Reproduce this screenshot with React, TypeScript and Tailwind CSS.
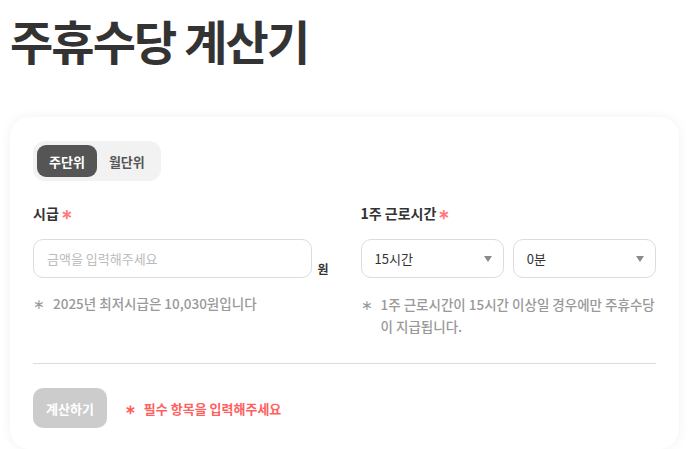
import React from "react";

const font = { fontFamily: '"Noto Sans CJK KR", "Noto Sans", sans-serif' };

function Caret() {
  return (
    <svg width="8" height="6" viewBox="0 0 8 6" className="shrink-0">
      <path d="M0 0 H8 L4 6 Z" fill="#8a8a8a" />
    </svg>
  );
}

function SelectBox({ value }: { value: string }) {
  return (
    <div className="flex-1 h-[39px] rounded-[10px] border border-[#dcdcdc] bg-white flex items-center justify-between pl-[13px] pr-[11px]">
      <span className="text-[13px] text-[#333]">{value}</span>
      <Caret />
    </div>
  );
}

export default function App() {
  return (
    <div className="min-h-screen bg-white px-[10px] overflow-hidden" style={font}>
      <h1 className="text-[47px] font-bold text-[#333] leading-[1.2] tracking-[-0.04em] pt-[12px]">
        주휴수당 계산기
      </h1>
      <div className="mt-[49px] bg-white rounded-[20px] shadow-[0_0_12px_rgba(0,0,0,0.06)] px-[23px] pt-[24px] pb-[21px]">
        <div className="inline-flex bg-[#f2f2f2] rounded-[12px] p-1 gap-0">
          <button className="h-8 px-[12px] rounded-[9px] bg-[#555] text-white text-[13px] font-bold">
            주단위
          </button>
          <button className="h-8 px-[12px] rounded-[9px] text-[#555] text-[13px] font-bold">
            월단위
          </button>
        </div>

        <div className="grid grid-cols-2 gap-8 mt-[22px]">
          <div>
            <div className="text-[14px] font-bold text-[#333] leading-5 flex items-center gap-[2px]">
              시급<span className="text-[#ff7b7b] text-[14px] font-bold leading-none">∗</span>
            </div>
            <div className="flex items-end gap-[5px] mt-[16px]">
              <div className="flex-1 h-[39px] rounded-[10px] border border-[#dcdcdc] flex items-center pl-[13px]">
                <span className="text-[13px] text-[#bbb]">금액을 입력해주세요</span>
              </div>
              <span className="text-[12px] font-bold text-[#333] leading-none pb-[3px]">원</span>
            </div>
            <div className="flex gap-[8px] mt-[15px] text-[13.5px] text-[#999] font-medium leading-[21px]">
              <span>∗</span>
              <span>2025년 최저시급은 10,030원입니다</span>
            </div>
          </div>
          <div>
            <div className="text-[14px] font-bold text-[#333] leading-5 flex items-center gap-[2px]">
              1주 근로시간<span className="text-[#ff7b7b] text-[14px] font-bold leading-none">∗</span>
            </div>
            <div className="flex gap-[9px] mt-[16px]">
              <SelectBox value="15시간" />
              <SelectBox value="0분" />
            </div>
            <div className="flex gap-[8px] mt-[15px] text-[13.5px] text-[#999] font-medium leading-[22px]">
              <span>∗</span>
              <span className="flex-1 whitespace-nowrap">
                1주 근로시간이 15시간 이상일 경우에만 주휴수당
                <br />
                이 지급됩니다.
              </span>
            </div>
          </div>
        </div>

        <div className="h-px bg-[#dcdcdc] mt-[26px]" />

        <div className="flex items-center gap-[18px] mt-[24px]">
          <button className="h-10 px-[13px] rounded-[10px] bg-[#cccccc] text-white text-[13px] font-bold">
            계산하기
          </button>
          <div className="flex gap-[8px] text-[13px] font-semibold text-[#ff5f5f]">
            <span>∗</span>
            <span>필수 항목을 입력해주세요</span>
          </div>
        </div>
      </div>
    </div>
  );
}
